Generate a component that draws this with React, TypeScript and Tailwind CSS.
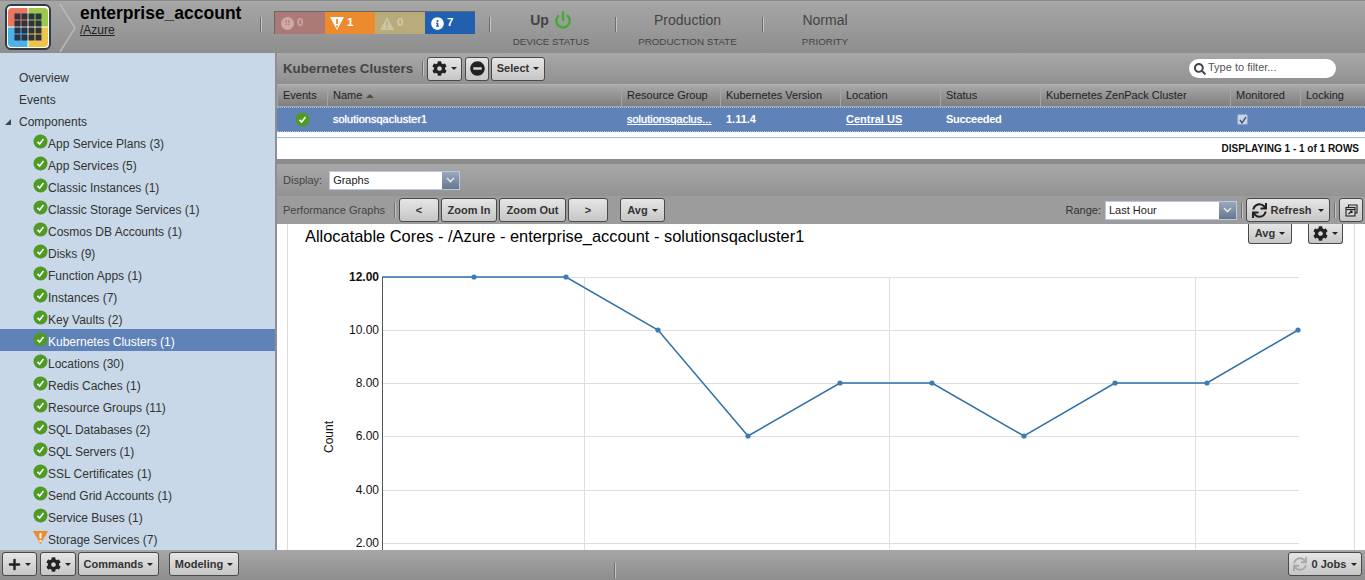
import React from "react";
import { FaCog, FaMinusCircle, FaPlus, FaSearch, FaSync, FaInfoCircle } from "react-icons/fa";
import { Power } from "lucide-react";

const Caret = ({ className = "" }: { className?: string }) => (
  <span className={`inline-block w-0 h-0 border-x-[3px] border-x-transparent border-t-[3px] border-t-[#222] ${className}`} />
);

const Btn = ({ children, className = "" }: { children: React.ReactNode; className?: string }) => (
  <div className={`flex items-center justify-center gap-1 h-6 shrink-0 rounded-[3px] border border-[#4a4a4a] bg-gradient-to-b from-[#e6e6e6] to-[#c6c6c6] text-[11px] font-bold text-[#333] ${className}`}>
    {children}
  </div>
);

const Sep = ({ className = "" }: { className?: string }) => (
  <span className={`w-px h-[15px] bg-[#6e6e6e] border-r border-r-[#c4c4c4] box-content shrink-0 ${className}`} />
);

const Check = () => (
  <svg width="15" height="15" viewBox="0 0 15 15" className="shrink-0">
    <circle cx="7.5" cy="7.5" r="7" fill="#4f9a22" />
    <path d="M4.5 7.8 L6.6 10 L10.5 5" fill="none" stroke="#fff" strokeWidth="1.7" />
  </svg>
);

const Warn = () => (
  <svg width="15" height="15" viewBox="0 0 15 15" className="shrink-0">
    <path d="M0 1 H15 L7.5 14.5 Z" fill="#ee8a2e" />
    <path d="M7.5 3 V8.5 M7.5 10 V12" stroke="#fff" strokeWidth="2" />
  </svg>
);

const components = [
  "App Service Plans (3)", "App Services (5)", "Classic Instances (1)", "Classic Storage Services (1)",
  "Cosmos DB Accounts (1)", "Disks (9)", "Function Apps (1)", "Instances (7)", "Key Vaults (2)",
  "Kubernetes Clusters (1)", "Locations (30)", "Redis Caches (1)", "Resource Groups (11)",
  "SQL Databases (2)", "SQL Servers (1)", "SSL Certificates (1)", "Send Grid Accounts (1)",
  "Service Buses (1)", "Storage Services (7)",
];

const Logo = () => {
  const cells: React.ReactNode[] = [];
  for (let r = 0; r < 4; r++)
    for (let c = 0; c < 4; c++)
      cells.push(<rect key={`${r}${c}`} x={9.5 + c * 7} y={9.5 + r * 7} width="6" height="6" fill="#2c3340" />);
  return (
    <svg width="46" height="46" viewBox="0 0 46 46" className="shrink-0">
      <rect x="1" y="1" width="44" height="44" rx="5" fill="#fff" stroke="#333b45" strokeWidth="2" />
      <path d="M3 8 a4 4 0 0 1 4 -4 H22.5 V22.5 H3 Z" fill="#e9775f" />
      <path d="M23.5 4 H39 a4 4 0 0 1 4 4 V22.5 H23.5 Z" fill="#9cc94b" />
      <path d="M3 23.5 H22.5 V43 H7 a4 4 0 0 1 -4 -4 Z" fill="#4cb1e7" />
      <path d="M23.5 23.5 H43 V39 a4 4 0 0 1 -4 4 H23.5 Z" fill="#f0c44b" />
      {cells}
    </svg>
  );
};

const Stat = ({ value, label, width, children }: { value: string; label: string; width: string; children?: React.ReactNode }) => (
  <div className={`flex flex-col items-center self-start shrink-0 ${width}`}>
    <div className="flex items-center gap-[5px] mt-[7px] h-[24px] text-[14px] text-[#444] whitespace-nowrap">
      {children ? <b>{value}</b> : value}
      {children}
    </div>
    <div className="mt-[4px] text-[9.8px] leading-[12px] text-[#444] whitespace-nowrap">{label}</div>
  </div>
);

const Header = () => (
  <header className="flex items-center h-[53px] shrink-0 bg-gradient-to-b from-[#a6a6a6] to-[#8e8e8e] border-t border-t-[#8a8a8a]">
    <div className="ml-[5px]"><Logo /></div>
    <svg width="18" height="50" viewBox="0 0 18 50" className="ml-[8px] shrink-0">
      <path d="M1 2 L16 26 L1 50" fill="none" stroke="#b9b9b9" strokeWidth="1.5" />
    </svg>
    <div className="ml-[3px] w-[180px] shrink-0 self-start mt-[2px]">
      <div className="text-[17.5px] leading-[20px] font-bold text-black">enterprise_account</div>
      <div className="text-[12px] leading-[14px] text-[#222] underline">/Azure</div>
    </div>
    <Sep className="-mt-[6px]" />
    <div className="ml-[12px] flex w-[201px] h-[23px] self-start mt-[10px] shrink-0 border-l border-t border-[#666] text-[11.5px] font-bold text-white">
      <div className="flex items-center gap-[3px] w-[50px] pl-[6px] bg-[#ab7a76]">
        <span className="flex items-center justify-center w-[13px] h-[13px] rounded-full bg-[#cfa9a6] text-[8px] text-[#ab7a76]">!!</span>
        <span className="text-[#cfa9a6]">0</span>
      </div>
      <div className="flex items-center gap-[3px] w-[50px] pl-[5px] bg-[#ee8a2e]">
        <svg width="14" height="13" viewBox="0 0 14 13"><path d="M0 0 H14 L7 13 Z" fill="#fff" /><path d="M7 2 V7 M7 8.5 V10.5" stroke="#ee8a2e" strokeWidth="1.8" /></svg>
        1
      </div>
      <div className="flex items-center gap-[3px] w-[50px] pl-[5px] bg-[#b9ac7a]">
        <svg width="14" height="13" viewBox="0 0 14 13"><path d="M7 0 L14 13 H0 Z" fill="#cbc5a8" /><path d="M7 4 V8.5 M7 9.5 V11.5" stroke="#b9ac7a" strokeWidth="1.6" /></svg>
        <span className="text-[#d2cba9]">0</span>
      </div>
      <div className="flex items-center gap-[3px] w-[50px] pl-[6px] bg-[#2160ae]">
        <FaInfoCircle size={13} color="#fff" />
        7
      </div>
    </div>
    <Sep className="ml-[14px] -mt-[6px]" />
    <Stat value="Up" label="DEVICE STATUS" width="w-[120px] mr-[4px]">
      <Power size={18} strokeWidth={3.2} color="#3fae2a" />
    </Stat>
    <Sep className="-mt-[6px]" />
    <Stat value="Production" label="PRODUCTION STATE" width="w-[141px] mr-[4px]" />
    <Sep className="-mt-[6px]" />
    <Stat value="Normal" label="PRIORITY" width="w-[122px]" />
  </header>
);

const Sidebar = () => (
  <aside className="w-[277px] shrink-0 h-full overflow-hidden bg-[#c8d8e8] border-r-2 border-r-[#8f8f8f] pt-[12px] text-[12px] text-[#333]">
    <div className="h-[22px] leading-[22px] pt-[2px] pl-[19px]">Overview</div>
    <div className="h-[22px] leading-[22px] pt-[2px] pl-[19px]">Events</div>
    <div className="flex items-center h-[22px] pt-[3px] pl-[5px]">
      <svg width="6" height="6" viewBox="0 0 6 6" className="mr-[8px]"><path d="M6 0 V6 H0 Z" fill="#444" /></svg>
      Components
    </div>
    {components.map((c) => {
      const active = c.startsWith("Kubernetes");
      return (
        <div key={c} className={`flex items-center h-[22px] pt-[3px] pl-[33px] ${active ? "bg-[#5f83b8] text-white" : ""}`}>
          <span className="-mt-[4px]">{c.startsWith("Storage") ? <Warn /> : <Check />}</span>
          {c}
        </div>
      );
    })}
  </aside>
);

const gridCols = "grid grid-cols-[50px_294px_99px_120px_100px_100px_190px_70px_64px]";
const heads = ["Events", "Name", "Resource Group", "Kubernetes Version", "Location", "Status", "Kubernetes ZenPack Cluster", "Monitored", "Locking"];

const Toolbar = () => (
  <div className="flex items-center h-[31px] shrink-0 bg-gradient-to-b from-[#a8a8a8] to-[#909090] pl-[6px]">
    <div className="w-[139px] text-[13.3px] font-bold text-[#444] shrink-0">Kubernetes Clusters</div>
    <Sep className="mr-[3px]" />
    <Btn className="w-[35px]"><FaCog size={15} color="#222" /><Caret /></Btn>
    <Btn className="w-[24px] ml-[3px]"><FaMinusCircle size={15} color="#222" /></Btn>
    <Btn className="w-[54px] ml-[2px]">Select<Caret /></Btn>
    <div className="ml-auto mr-[29px] flex items-center gap-[2px] w-[147px] h-[19px] rounded-full bg-white pl-[5px] pb-[2px] text-[11px] text-[#555]">
      <FaSearch size={12} color="#444" className="mt-[2px]" />
      Type to filter...
    </div>
  </div>
);

const Table = () => (
  <div className="shrink-0">
    <div className={`${gridCols} h-[22px] items-stretch bg-gradient-to-b from-[#a9a9a9] to-[#7f7f7f] border-t border-t-[#b4b4b4] text-[11px] text-[#222]`}>
      {heads.map((h) => (
        <div key={h} className="flex items-center gap-[4px] border-l border-l-[#a4a4a4] pl-[5px]">
          {h}
          {h === "Name" && <span className="w-0 h-0 border-x-[4px] border-x-transparent border-b-[4px] border-b-[#5b4a36]" />}
        </div>
      ))}
    </div>
    <div className="h-px bg-[#a9a9a9]" />
    <div className={`${gridCols} h-[25px] items-center bg-[#5f83b8] border-y border-dotted border-y-[#a8bcd8] text-[11px] font-bold text-white`}>
      <div className="flex justify-center"><Check /></div>
      <div className="pl-[6px] font-normal [text-shadow:0_0_1px_#fff]">solutionsqacluster1</div>
      <div className="pl-[6px] pr-[6px] underline font-normal truncate [text-shadow:0_0_1px_#fff]">solutionsqaclus...</div>
      <div className="pl-[6px]">1.11.4</div>
      <div className="pl-[6px] underline">Central US</div>
      <div className="pl-[6px] tracking-[-0.3px]">Succeeded</div>
      <div />
      <div className="pl-[7px]">
        <span className="flex items-center justify-center w-[11px] h-[11px] rounded-[2px] bg-[#c6d4e8] border border-[#8ea4c4]">
          <svg width="8" height="8" viewBox="0 0 8 8"><path d="M1 4 L3 7 L7 1" fill="none" stroke="#4a5a70" strokeWidth="1.4" /></svg>
        </span>
      </div>
      <div />
    </div>
    <div className="h-[27px] bg-white">
      <div className="h-[5px]" />
      <div className="h-px bg-[#a0b8e0]" />
      <div className="text-right pr-[6px] pt-[5px] text-[10px] leading-[12px] font-bold text-[#111]">DISPLAYING 1 - 1 of 1 ROWS</div>
    </div>
  </div>
);

const Select = ({ value, width }: { value: string; width: string }) => (
  <div className={`flex h-[19px] shrink-0 ${width} border border-[#b9c8de] bg-white text-[11px] text-[#222]`}>
    <div className="flex-1 pl-[3px] leading-[17px]">{value}</div>
    <div className="flex items-center justify-center w-[17px] bg-gradient-to-b from-[#9aa8bc] to-[#66788f]">
      <svg width="9" height="6" viewBox="0 0 9 6"><path d="M1 1 L4.5 4.5 L8 1" fill="none" stroke="#e4e4e4" strokeWidth="1.6" /></svg>
    </div>
  </div>
);

const PopOut = () => (
  <svg width="13" height="13" viewBox="0 0 13 13" fill="none" stroke="#222" strokeWidth="1.1">
    <path d="M3.5 3 V1 H12 V9 H10" />
    <rect x="1" y="3.5" width="9" height="8.5" />
    <path d="M1 5.5 H10" />
    <path d="M3.5 10 L7 7 M5 7 H7 V9" />
  </svg>
);

const DisplayBars = () => (
  <div className="shrink-0 text-[11px] text-[#444]">
    <div className="h-[5px] bg-[#8c8c8c]" />
    <div className="flex items-center h-[32px] pl-[6px] gap-[7px] bg-gradient-to-b from-[#a8a8a8] to-[#939393]">
      Display:
      <Select value="Graphs" width="w-[131px]" />
    </div>
    <div className="flex items-center h-[28px] pl-[6px] pr-[2px] bg-[#9c9c9c]">
      <span className="w-[111px] shrink-0 whitespace-nowrap">Performance Graphs</span>
      <Sep className="mr-[3px]" />
      <Btn className="w-[40px]">&lt;</Btn>
      <Btn className="w-[56px] ml-[2px]">Zoom In</Btn>
      <Btn className="w-[67px] ml-[2px]">Zoom Out</Btn>
      <Btn className="w-[40px] ml-[2px]">&gt;</Btn>
      <Btn className="w-[45px] ml-[12px]">Avg<Caret /></Btn>
      <span className="ml-auto mr-[4px] text-[11px] text-[#333]">Range:</span>
      <Select value="Last Hour" width="w-[132px]" />
      <Sep className="ml-[4px] mr-[3px]" />
      <Btn className="w-[84px] !gap-[4px]"><FaSync size={15} color="#222" />Refresh<Caret className="ml-[3px]" /></Btn>
      <Sep className="ml-[4px] mr-[3px]" />
      <Btn className="w-[24px]"><PopOut /></Btn>
    </div>
  </div>
);

const pts: [number, number][] = [[382, 277], [474, 277], [566, 277], [658, 330], [748, 436], [840, 383], [932, 383], [1024, 436], [1115, 383], [1207, 383], [1298, 330]];
const ticks: [string, number][] = [["12.00", 277], ["10.00", 330], ["8.00", 383], ["6.00", 436], ["4.00", 490], ["2.00", 543]];

const Chart = () => (
  <svg width="1066" height="302" viewBox="288 248 1066 302" className="block shrink-0">
    {ticks.map(([t, y]) => (
      <g key={t}>
        <line x1="382" x2="1299" y1={y + 0.5} y2={y + 0.5} stroke="#dedede" />
        <text x="379" y={y + 4} textAnchor="end" fontSize="12" fontWeight={t === "12.00" ? 700 : 400} fill="#111" fontFamily="Liberation Sans">{t}</text>
      </g>
    ))}
    {[584.5, 889.5, 1195.5].map((x) => <line key={x} x1={x} x2={x} y1="277" y2="550" stroke="#dedede" />)}
    <line x1="382.5" x2="382.5" y1="277" y2="550" stroke="#555" />
    <text transform="translate(333 437) rotate(-90)" textAnchor="middle" fontSize="12" fill="#111" fontFamily="Liberation Sans">Count</text>
    <polyline points={pts.map((p) => p.join(",")).join(" ")} fill="none" stroke="#2f70a9" strokeWidth="1.5" />
    {pts.slice(1).map(([x, y]) => <circle key={x} cx={x} cy={y} r="2.6" fill="#3c7cb4" />)}
  </svg>
);

const Graph = () => (
  <div className="flex-1 min-h-0 overflow-hidden bg-white px-[10px]">
    <div className="h-full border-x border-x-[#dcdcdc] overflow-hidden">
      <div className="flex items-start h-[24px]">
        <div className="ml-[17px] mt-[2px] text-[16.4px] leading-[20px] text-black whitespace-nowrap">Allocatable Cores - /Azure - enterprise_account - solutionsqacluster1</div>
        <Btn className="ml-auto w-[44px] !h-[20px] rounded-t-none border-t-0">Avg<Caret /></Btn>
        <Btn className="ml-[16px] mr-[11px] w-[35px] !h-[20px] rounded-t-none border-t-0"><FaCog size={15} color="#222" /><Caret /></Btn>
      </div>
      <Chart />
    </div>
  </div>
);

const Footer = () => (
  <footer className="flex items-center h-[30px] shrink-0 bg-gradient-to-b from-[#a6a6a6] to-[#8e8e8e] pl-[2px] pr-[3px] pb-[2px]">
    <Btn className="w-[35px]"><FaPlus size={13} color="#222" /><Caret /></Btn>
    <Btn className="w-[36px] ml-[3px]"><FaCog size={15} color="#222" /><Caret /></Btn>
    <Btn className="w-[81px] ml-[2px]">Commands<Caret /></Btn>
    <Btn className="w-[70px] ml-[10px]">Modeling<Caret /></Btn>
    <Sep className="ml-[375px] mt-[12px]" />
    <Btn className="ml-auto w-[74px] !gap-[5px]"><FaSync size={14} color="#aaa" />0 Jobs<Caret /></Btn>
  </footer>
);

export default function App() {
  return (
    <div className="w-[1365px] h-[580px] flex flex-col overflow-hidden font-['Liberation_Sans',Arial,sans-serif]">
      <Header />
      <div className="flex flex-1 min-h-0">
        <Sidebar />
        <main className="flex-1 min-w-0 flex flex-col bg-white">
          <Toolbar />
          <Table />
          <DisplayBars />
          <Graph />
        </main>
      </div>
      <Footer />
    </div>
  );
}
